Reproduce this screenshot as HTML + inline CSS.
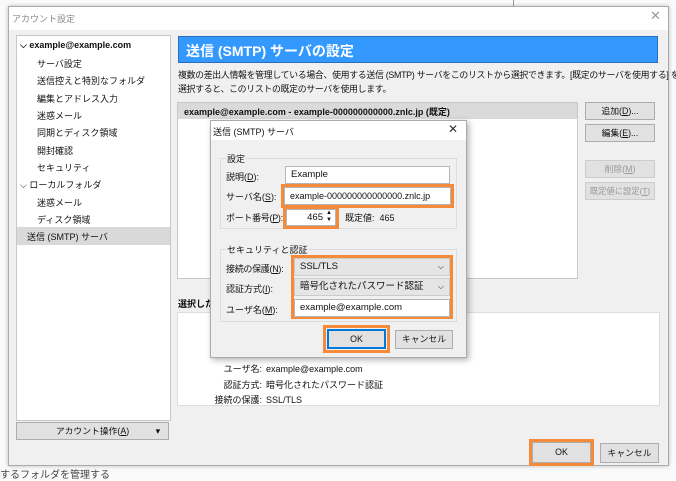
<!DOCTYPE html><html><head><meta charset="utf-8"><style>
*{box-sizing:border-box;margin:0;padding:0}
body{width:676px;height:480px;overflow:hidden;background:#fff;font-family:"Liberation Sans","Noto Sans CJK JP",sans-serif;font-size:9px;color:#111;position:relative}
.a{position:absolute;white-space:nowrap}
.btn{position:absolute;background:#e1e1e1;border:1px solid #adadad;text-align:center;font-size:8.8px;white-space:nowrap}
.inp{position:absolute;background:#fff;border:1px solid #b5b5b5;padding-left:5px;font-size:9.5px;white-space:nowrap;overflow:hidden}
.or{position:absolute;border:3px solid #f58a3a}
.tree div{position:absolute;font-size:9px;white-space:nowrap}
</style></head><body>
<div class="a" style="left:0;top:0;width:676px;height:480px;background:#fafafa"></div>
<div class="a" style="left:513px;top:0;width:1px;height:7px;background:#999"></div>
<div class="a" style="left:0;top:466px;font-size:10px;color:#444">するフォルダを管理する</div>
<div class="a" style="left:8px;top:6px;width:661px;height:460px;background:#f0f0f0;border:1px solid #aaa;box-shadow:0 0 4px rgba(0,0,0,.25)"></div>
<div class="a" style="left:9px;top:7px;width:659px;height:23px;background:#fff"></div>
<div class="a" style="left:12px;top:12px;color:#888;font-size:9px">アカウント設定</div>
<div class="a" style="left:650px;top:8px;color:#999;font-size:13px">✕</div>
<div class="a tree" style="left:16px;top:35px;width:155px;height:386px;background:#fff;border:1px solid #c8c8c8">
<div style="left:3px;top:4px;font-weight:bold">⌵ example@example.com</div>
<div style="left:20px;top:21px">サーバ設定</div>
<div style="left:20px;top:38px">送信控えと特別なフォルダ</div>
<div style="left:20px;top:56px">編集とアドレス入力</div>
<div style="left:20px;top:73px">迷惑メール</div>
<div style="left:20px;top:90px">同期とディスク領域</div>
<div style="left:20px;top:108px">開封確認</div>
<div style="left:20px;top:125px">セキュリティ</div>
<div style="left:3px;top:142px">⌵ ローカルフォルダ</div>
<div style="left:20px;top:160px">迷惑メール</div>
<div style="left:20px;top:177px">ディスク領域</div>
<div style="left:0;top:191px;width:153px;height:18px;background:#d9d9d9"></div>
<div style="left:10px;top:194px">送信 (SMTP) サーバ</div>
</div>
<div class="btn" style="left:16px;top:422px;width:153px;height:18px;line-height:16px">アカウント操作(<u>A</u>)<span style="position:absolute;right:8px">▾</span></div>
<div class="a" style="left:178px;top:36px;width:480px;height:27px;background:#3399ff;border:1px solid #2a6fbf;color:#fff;font-size:14px;font-weight:bold;padding:4px 7px">送信 (SMTP) サーバの設定</div>
<div class="a" style="left:178px;top:68px;line-height:14px;font-size:8.9px;letter-spacing:-0.3px">複数の差出人情報を管理している場合、使用する送信 (SMTP) サーバをこのリストから選択できます。[既定のサーバを使用する] を<br>選択すると、このリストの既定のサーバを使用します。</div>
<div class="a" style="left:177px;top:102px;width:401px;height:177px;background:#fff;border:1px solid #c8c8c8"></div>
<div class="a" style="left:178px;top:103px;width:399px;height:16px;background:#dadada;font-weight:bold;padding:2px 6px;font-size:9px">example@example.com - example-000000000000.znlc.jp (既定)</div>
<div class="btn" style="left:585px;top:102px;width:70px;height:18px;line-height:16px">追加(<u>D</u>)...</div>
<div class="btn" style="left:585px;top:124px;width:70px;height:18px;line-height:16px">編集(<u>E</u>)...</div>
<div class="btn" style="left:585px;top:160px;width:70px;height:18px;line-height:16px;color:#999;border-color:#ccc">削除(<u>M</u>)</div>
<div class="btn" style="left:585px;top:182px;width:70px;height:18px;line-height:16px;color:#999;border-color:#ccc;font-size:8.3px">既定値に設定(<u>T</u>)</div>
<div class="a" style="left:178px;top:297px;font-weight:bold">選択したサーバの詳細:</div>
<div class="a" style="left:177px;top:312px;width:483px;height:94px;background:#fff;border:1px solid #ddd"></div>
<div class="a" style="left:180px;top:331px;width:82px;text-align:right;line-height:15.5px">サーバ名:<br>ポート:<br>ユーザ名:<br>認証方式:<br>接続の保護:</div>
<div class="a" style="left:266px;top:362px;line-height:15.5px">example@example.com<br>暗号化されたパスワード認証<br>SSL/TLS</div>
<div class="or" style="left:529px;top:439px;width:65px;height:27px"></div>
<div class="btn" style="left:532px;top:442px;width:59px;height:21px;line-height:19px">OK</div>
<div class="btn" style="left:600px;top:443px;width:59px;height:20px;line-height:18px">キャンセル</div>
<div class="a" style="left:210px;top:120px;width:257px;height:238px;background:#f0f0f0;border:1px solid #aaa;box-shadow:2px 2px 6px rgba(0,0,0,.3)"></div>
<div class="a" style="left:211px;top:121px;width:255px;height:19px;background:#fff"></div>
<div class="a" style="left:213px;top:125px">送信 (SMTP) サーバ</div>
<div class="a" style="left:448px;top:122px;font-size:12px;color:#333">✕</div>
<div class="a" style="left:220px;top:158px;width:237px;height:71px;border:1px solid #dcdcdc"></div>
<div class="a" style="left:226px;top:152px;background:#f0f0f0;padding:0 1px">設定</div>
<div class="a" style="left:226px;top:170px">説明(<u>D</u>):</div>
<div class="a" style="left:226px;top:190px">サーバ名(<u>S</u>):</div>
<div class="a" style="left:226px;top:211px;letter-spacing:-0.3px">ポート番号(<u>P</u>):</div>
<div class="inp" style="left:285px;top:166px;width:165px;height:18px;line-height:16px">Example</div>
<div class="or" style="left:281px;top:184px;width:173px;height:24px"></div>
<div class="inp" style="left:284px;top:187px;width:167px;height:18px;line-height:16px;font-size:9px">example-000000000000000.znlc.jp</div>
<div class="or" style="left:283px;top:206px;width:56px;height:23px"></div>
<div class="inp" style="left:286px;top:209px;width:50px;height:17px;line-height:15px;text-align:right;padding-right:12px">465</div>
<div class="a" style="left:326px;top:210px;font-size:6px;line-height:7px">▲<br>▼</div>
<div class="a" style="left:345px;top:211px">既定値:&nbsp; 465</div>
<div class="a" style="left:220px;top:249px;width:237px;height:73px;border:1px solid #dcdcdc"></div>
<div class="a" style="left:226px;top:243px;background:#f0f0f0;padding:0 1px">セキュリティと認証</div>
<div class="a" style="left:226px;top:262px;letter-spacing:-0.3px">接続の保護(<u>N</u>):</div>
<div class="a" style="left:226px;top:282px">認証方式(<u>I</u>):</div>
<div class="a" style="left:226px;top:303px">ユーザ名(<u>M</u>):</div>
<div class="or" style="left:291px;top:255px;width:162px;height:64px"></div>
<div class="inp" style="left:294px;top:258px;width:156px;height:18px;line-height:16px;background:#e5e5e5;border-color:#ccc">SSL/TLS<span style="position:absolute;right:5px;font-size:8px">⌵</span></div>
<div class="inp" style="left:294px;top:278px;width:156px;height:18px;line-height:16px;background:#e5e5e5;border-color:#ccc">暗号化されたパスワード認証<span style="position:absolute;right:5px;font-size:8px">⌵</span></div>
<div class="inp" style="left:294px;top:299px;width:156px;height:18px;line-height:16px">example@example.com</div>
<div class="or" style="left:323px;top:325px;width:67px;height:28px"></div>
<div class="btn" style="left:327px;top:329px;width:59px;height:20px;line-height:17px;border:2px solid #0078d7">OK</div>
<div class="btn" style="left:395px;top:330px;width:58px;height:19px;line-height:17px">キャンセル</div>
</body></html>
